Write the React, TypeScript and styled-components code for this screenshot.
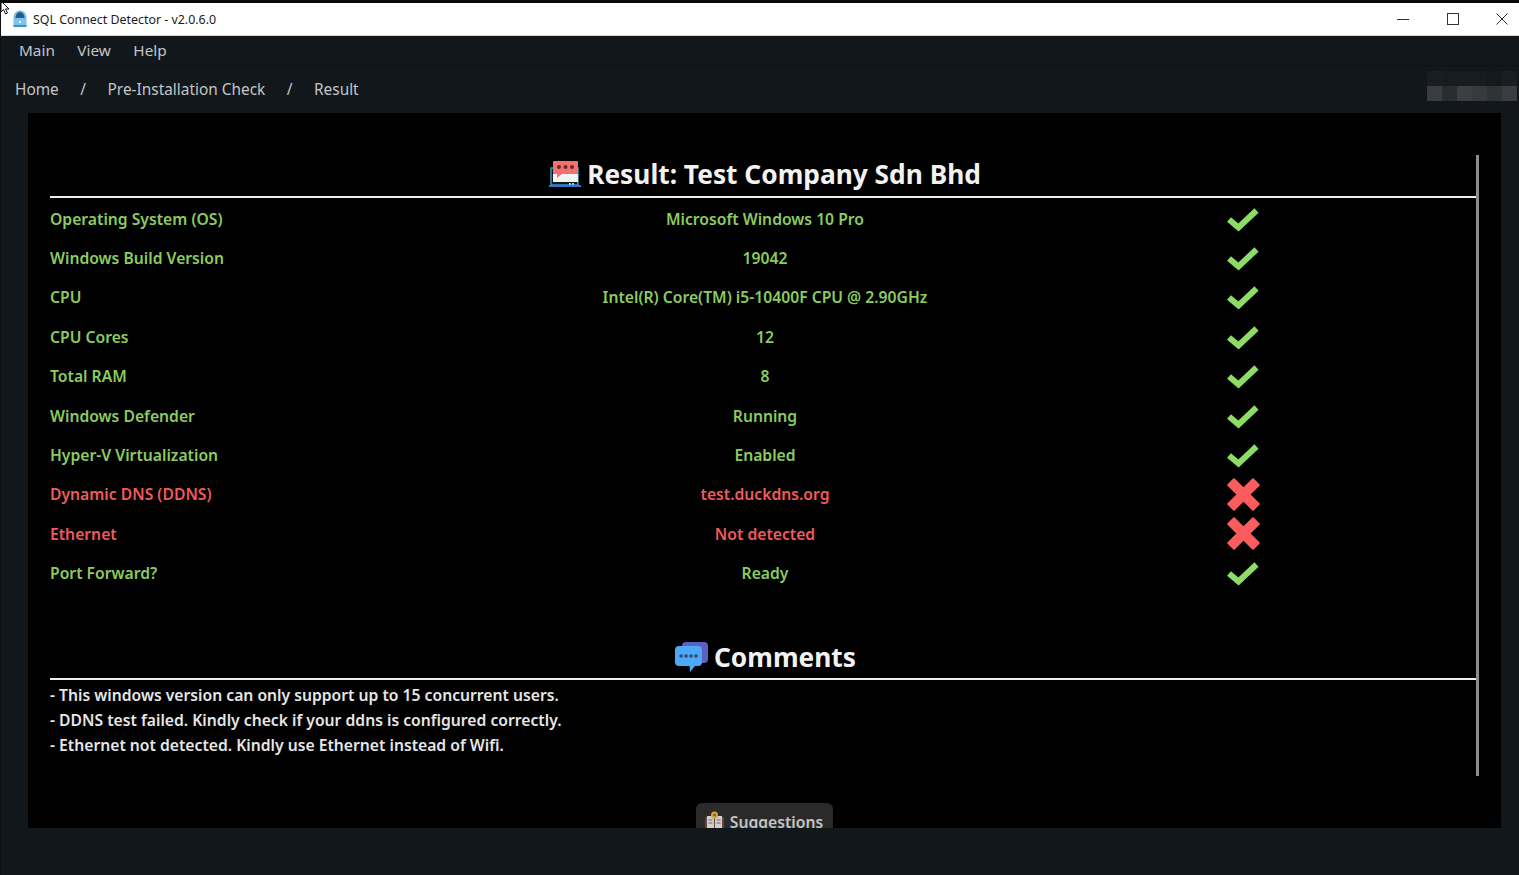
import React from "react";
import styled, { createGlobalStyle } from "styled-components";

const Global = createGlobalStyle`
  html, body { margin: 0; padding: 0; background: #12171c; }
  body { font-family: "Noto Sans", "Open Sans", sans-serif; }
  * { box-sizing: border-box; }
`;

const Page = styled.div`
  position: relative;
  width: 1519px;
  height: 875px;
  display: flex;
  flex-direction: column;
  overflow: hidden;
  background: #12171c;
  border-top: 3px solid #0a0a0a;
  border-left: 1px solid #0d0f12;
`;

const Cursor = styled.svg`
  position: absolute;
  left: -1px;
  top: -3px;
  z-index: 2;
`;

const TitleBar = styled.div`
  height: 33px;
  flex: none;
  background: #fff;
  display: flex;
  align-items: center;
  padding-left: 11px;
  border-bottom: 1px solid #d8d8d8;
  overflow: hidden;
`;

const TitleText = styled.span`
  margin-left: 5px;
  font-size: 12.4px;
  color: #1a1a1a;
  line-height: 33px;
  flex: 1;
`;

const WinGroup = styled.div`
  display: flex;
  margin-right: -8px;
`;

const WinButton = styled.div`
  width: 49.5px;
  height: 32px;
  display: flex;
  align-items: center;
  justify-content: center;
`;

const MenuBar = styled.div`
  height: 30px;
  flex: none;
  display: flex;
  align-items: center;
  gap: 22.5px;
  padding-left: 18px;
  padding-bottom: 1px;
  border-bottom: 1px solid #0f1316;
`;

const MenuItem = styled.span`
  font-size: 15.3px;
  color: #c4c6c8;
`;

const Crumbs = styled.div`
  position: relative;
  height: 47px;
  flex: none;
  display: flex;
  align-items: center;
  padding-left: 14px;
  font-size: 15.4px;
  color: #c4c6c8;
`;

const CrumbSep = styled.span`
  margin: 0 21.5px;
`;

const Blur = styled.div`
  position: absolute;
  left: 1426px;
  top: 5px;
  width: 90px;
  height: 30px;
  display: grid;
  grid-template-columns: repeat(6, 15px);
  grid-template-rows: repeat(2, 15px);
`;

const BlurCell = styled.div<{ $c: string }>`
  background: ${(p) => p.$c};
`;

const Panel = styled.div`
  position: relative;
  margin-left: 27px;
  width: 1473px;
  height: 715px;
  flex: none;
  background: #000;
  overflow: hidden;
  padding: 42px 0 0 22px;
`;

const ScrollThumb = styled.div`
  position: absolute;
  left: 1448px;
  top: 42px;
  width: 3px;
  height: 621px;
  background: #8c8c8c;
`;

const Section = styled.div`
  width: 1428px;
`;

const Heading = styled.div<{ $mt?: number; $pb: number }>`
  margin-top: ${(p) => p.$mt ?? 0}px;
  display: flex;
  align-items: center;
  justify-content: center;
  gap: 6px;
  height: 43px;
  padding-bottom: ${(p) => p.$pb}px;
  padding-left: 2px;
  border-bottom: 2px solid #eee;
  font-size: 26.3px;
  font-weight: 700;
  color: #f2f2f2;
`;

const Row = styled.div<{ $bad?: boolean }>`
  display: grid;
  grid-template-columns: 472px 486px 470px;
  align-items: center;
  height: 39.4px;
  padding-top: 2px;
  font-size: 15.7px;
  font-weight: 600;
  color: ${(p) => (p.$bad ? "#f05a5c" : "#8ccb5e")};
`;

const Mid = styled.div`
  text-align: center;
`;

const IconCell = styled.div`
  display: flex;
  justify-content: center;
`;

const Comments = styled.div`
  padding-top: 3px;
`;

const Comment = styled.div`
  height: 25px;
  line-height: 25px;
  font-size: 15.7px;
  font-weight: 600;
  color: #e6e6e6;
`;

const SuggestWrap = styled.div`
  display: flex;
  justify-content: center;
  margin-top: 45px;
`;

const SuggestButton = styled.div`
  width: 137px;
  height: 38px;
  background: #2a2a2a;
  border-radius: 6px;
  display: flex;
  align-items: flex-start;
  justify-content: center;
  gap: 6px;
  padding-top: 8px;
  font-size: 15.7px;
  font-weight: 600;
  color: #c4c4c4;
`;

const Check = () => (
  <svg width="34" height="26" viewBox="0 0 34 26">
    <path d="M3 13.5 L12.5 21.5 L30.5 4.5" fill="none" stroke="#8ddc66" strokeWidth="6" strokeLinejoin="miter" />
  </svg>
);

const Cross = () => (
  <svg width="33" height="33" viewBox="4 4 26 26">
    <path d="M5 9.5 L9.5 5 L17 12.5 L24.5 5 L29 9.5 L21.5 17 L29 24.5 L24.5 29 L17 21.5 L9.5 29 L5 24.5 L12.5 17 Z" fill="#fb5c5e" stroke="#fb5c5e" strokeWidth="1.6" strokeLinejoin="round" />
  </svg>
);

const AppIcon = () => (
  <svg width="16" height="18" viewBox="0 0 16 18">
    <path d="M1.5 17 V7 C1.5 3 5 0.5 8 0.5 C11 0.5 14.5 3 14.5 7 V17 Z" fill="#7cc4ee" />
    <path d="M3.5 8 C3.5 4 6 2 8 2 C10 2 12.5 4 12.5 8 Z" fill="#1f5f88" />
    <rect x="7" y="11" width="2" height="2" fill="#fff" />
    <rect x="1.5" y="15" width="13" height="2" fill="#3f8fc8" />
  </svg>
);

const ResultIcon = () => (
  <svg width="32" height="28" viewBox="0 0 32 28">
    <rect x="2" y="8" width="27" height="17" fill="#101820" stroke="#3d9fc4" strokeWidth="1.4" />
    <rect x="4" y="1" width="25" height="13" rx="1" fill="#f46f6f" />
    <rect x="4" y="14" width="25" height="8" fill="#f4f4f4" />
    <path d="M8 13 V18 L13 14 Z" fill="#f46f6f" />
    <circle cx="10" cy="7" r="2" fill="#5a3028" />
    <circle cx="16.5" cy="7" r="2" fill="#5a3028" />
    <circle cx="23" cy="7" r="2" fill="#5a3028" />
    <rect x="0" y="25" width="32" height="2" fill="#3f6fd0" />
    <rect x="20" y="23" width="2" height="2" fill="#8fc8e8" />
    <rect x="23" y="23" width="2" height="2" fill="#8fc8e8" />
  </svg>
);

const CommentIcon = () => (
  <svg width="34" height="32" viewBox="0 0 34 32">
    <path d="M8 5 Q8 1 12 1 H30 Q34 1 34 5 V18 Q34 22 30 22 H12 Z" fill="#5a60c4" />
    <path d="M1 9 Q1 5 5 5 H24 Q28 5 28 9 V21 Q28 25 24 25 H21 L16 31 L15.5 25 H5 Q1 25 1 21 Z" fill="#4ea8f4" />
    {[7, 12, 17, 22].map((x) => (
      <circle key={x} cx={x} cy="15" r="1.8" fill="#2b4a78" />
    ))}
  </svg>
);

const BookIcon = () => (
  <svg width="19" height="20" viewBox="0 0 19 20">
    <rect x="0" y="6" width="19" height="14" fill="#6e4032" />
    <rect x="2" y="5" width="7" height="13" fill="#cfcfcf" />
    <rect x="10" y="5" width="7" height="13" fill="#cfcfcf" />
    <path d="M3.5 9 H7.5 M3.5 12 H7.5 M11.5 9 H15.5 M11.5 12 H15.5" stroke="#6a6a6a" strokeWidth="1" />
    <circle cx="9.5" cy="4" r="3.5" fill="#d8a23a" />
    <circle cx="9.5" cy="4" r="1.3" fill="#7a5a20" />
  </svg>
);

const rows: { label: string; value: string; bad?: boolean }[] = [
  { label: "Operating System (OS)", value: "Microsoft Windows 10 Pro" },
  { label: "Windows Build Version", value: "19042" },
  { label: "CPU", value: "Intel(R) Core(TM) i5-10400F CPU @ 2.90GHz" },
  { label: "CPU Cores", value: "12" },
  { label: "Total RAM", value: "8" },
  { label: "Windows Defender", value: "Running" },
  { label: "Hyper-V Virtualization", value: "Enabled" },
  { label: "Dynamic DNS (DDNS)", value: "test.duckdns.org", bad: true },
  { label: "Ethernet", value: "Not detected", bad: true },
  { label: "Port Forward?", value: "Ready" },
];

const blur = [
  "#1a1e22", "#181c20", "#181c20", "#181c20", "#15191d", "#1a1e22",
  "#3a3c3f", "#2a2d30", "#3c3e41", "#37393c", "#303336", "#3a3c3f",
];

export default function App() {
  return (
    <Page>
      <Global />
      <Cursor width="11" height="15" viewBox="0 0 11 15">
        <path d="M1 1 V12 L3.5 9.5 L5.5 14 L7.5 13 L5.5 9 H9 Z" fill="#fff" stroke="#111" strokeWidth="1" />
      </Cursor>
      <TitleBar>
        <AppIcon />
        <TitleText>SQL Connect Detector - v2.0.6.0</TitleText>
        <WinGroup>
          <WinButton>
            <svg width="12" height="12" viewBox="0 0 12 12"><path d="M0 6.5 H12" stroke="#333" strokeWidth="1" /></svg>
          </WinButton>
          <WinButton>
            <svg width="12" height="12" viewBox="0 0 12 12"><rect x="0.5" y="0.5" width="11" height="11" fill="none" stroke="#333" strokeWidth="1" /></svg>
          </WinButton>
          <WinButton>
            <svg width="12" height="12" viewBox="0 0 12 12"><path d="M0.5 0.5 L11.5 11.5 M11.5 0.5 L0.5 11.5" stroke="#333" strokeWidth="1" /></svg>
          </WinButton>
        </WinGroup>
      </TitleBar>
      <MenuBar>
        <MenuItem>Main</MenuItem>
        <MenuItem>View</MenuItem>
        <MenuItem>Help</MenuItem>
      </MenuBar>
      <Crumbs>
        <span>Home</span>
        <CrumbSep>/</CrumbSep>
        <span>Pre-Installation Check</span>
        <CrumbSep>/</CrumbSep>
        <span>Result</span>
        <Blur>
          {blur.map((c, i) => (
            <BlurCell key={i} $c={c} />
          ))}
        </Blur>
      </Crumbs>
      <Panel>
        <ScrollThumb />
        <Section>
          <Heading $pb={3}>
            <ResultIcon />
            <span>Result: Test Company Sdn Bhd</span>
          </Heading>
          {rows.map((r) => (
            <Row key={r.label} $bad={r.bad}>
              <div>{r.label}</div>
              <Mid>{r.value}</Mid>
              <IconCell>{r.bad ? <Cross /> : <Check />}</IconCell>
            </Row>
          ))}
          <Heading $mt={45} $pb={1}>
            <CommentIcon />
            <span>Comments</span>
          </Heading>
          <Comments>
            <Comment>- This windows version can only support up to 15 concurrent users.</Comment>
            <Comment>- DDNS test failed. Kindly check if your ddns is configured correctly.</Comment>
            <Comment>- Ethernet not detected. Kindly use Ethernet instead of Wifi.</Comment>
          </Comments>
          <SuggestWrap>
            <SuggestButton>
              <BookIcon />
              <span>Suggestions</span>
            </SuggestButton>
          </SuggestWrap>
        </Section>
      </Panel>
    </Page>
  );
}
